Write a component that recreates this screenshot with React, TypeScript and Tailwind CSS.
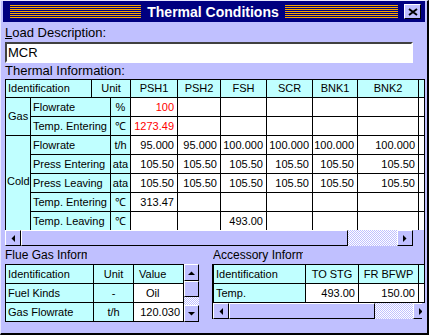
import React from "react";

const raised =
  "bg-[#c0c0ff] border border-t-white border-l-white border-r-black border-b-black flex items-center justify-center shrink-0";
const checker =
  "bg-[conic-gradient(#ffffff_25%,#c0c0ff_0_50%,#ffffff_0_75%,#c0c0ff_0)] bg-[length:2px_2px]";

// orange pinstripes of the title bar
const Stripes = ({ width }: { width: number }) => (
  <svg width={width} height="13" viewBox={`0 0 ${width} 13`} className="shrink-0 block">
    {[0, 2, 4, 6, 8, 10, 12].map((y) => (
      <rect key={y} x="0" y={y} width={width} height="1" fill="#f8a800" />
    ))}
  </svg>
);

const ArrowLeft = () => (
  <svg width="4" height="7" viewBox="0 0 4 7">
    <polygon points="4,0 4,7 0.5,3.5" fill="black" />
  </svg>
);
const ArrowRight = () => (
  <svg width="4" height="7" viewBox="0 0 4 7">
    <polygon points="0,0 0,7 3.5,3.5" fill="black" />
  </svg>
);
const ArrowUp = () => (
  <svg width="7" height="4" viewBox="0 0 7 4">
    <polygon points="0,4 7,4 3.5,0.5" fill="black" />
  </svg>
);
const ArrowDown = () => (
  <svg width="7" height="4" viewBox="0 0 7 4">
    <polygon points="0,0 7,0 3.5,3.5" fill="black" />
  </svg>
);

const head = "bg-[#c0ffff] flex items-center justify-center";
const label = "bg-[#c0ffff] flex items-center pl-[2px] whitespace-nowrap overflow-hidden";
const unit = "bg-[#c0ffff] flex items-center justify-center";
const val = "bg-white flex items-center justify-end pr-[3px] whitespace-nowrap";

// thermal rows (the Gas / Cold label cells span them)
const gasRows = [
  { name: "Flowrate", unit: "%", vals: ["100", "", "", "", "", ""] },
  { name: "Temp. Entering", unit: "℃", vals: ["1273.49", "", "", "", "", ""] },
];
const coldRows = [
  {
    name: "Flowrate",
    unit: "t/h",
    vals: ["95.000", "95.000", "100.000", "100.000", "100.000", "100.000"],
  },
  {
    name: "Press Entering",
    unit: "ata",
    vals: ["105.50", "105.50", "105.50", "105.50", "105.50", "105.50"],
  },
  {
    name: "Press Leaving",
    unit: "ata",
    vals: ["105.50", "105.50", "105.50", "105.50", "105.50", "105.50"],
  },
  { name: "Temp. Entering", unit: "℃", vals: ["313.47", "", "", "", "", ""] },
  { name: "Temp. Leaving", unit: "℃", vals: ["", "", "493.00", "", "", ""] },
];

const Row = ({
  row,
  red,
}: {
  row: { name: string; unit: string; vals: string[] };
  red?: boolean;
}) => (
  <>
    <div className={`${label} col-span-2`}>{row.name}</div>
    <div className={unit}>{row.unit}</div>
    {row.vals.map((v, i) => (
      <div key={i} className={`${val} ${red ? "text-[#ff0000]" : ""}`}>
        {v}
      </div>
    ))}
    <div className="bg-white" />
  </>
);

const App: React.FC = () => {
  return (
    <div className="w-[429px] h-[335px] overflow-hidden bg-[#c0c0ff] border-l border-t border-l-[#e8e8ff] border-t-[#e8e8ff] border-r-2 border-b-2 border-r-black border-b-black font-['Liberation_Sans',Arial,sans-serif] text-black">
      {/* Title bar */}
      <div className="ml-[2px] w-[422px] h-[21px] bg-[#000080] flex items-center pl-[7px] pr-[4px]">
        <Stripes width={131} />
        <div className="flex-1 text-center text-white font-bold text-[14px] leading-none whitespace-nowrap">
          Thermal Conditions
        </div>
        <Stripes width={113} />
        <button className={`${raised} ml-[6px] w-[17px] h-[15px]`} aria-label="Close">
          <svg width="10" height="8" viewBox="0 0 10 8">
            <path d="M1 1L9 7M9 1L1 7" stroke="black" strokeWidth="2" />
          </svg>
        </button>
      </div>

      <div className="pl-[4px]">
        {/* Load description */}
        <div className="h-[20px] pt-[3px] text-[13px] leading-[15px]">
          <span className="underline">L</span>oad Description:
        </div>
        <div className="w-[408px] h-[21px] bg-white border-2 border-t-[#404040] border-l-[#404040] border-b-white border-r-white flex items-center pl-[1px] text-[13px]">
          MCR
        </div>

        {/* Thermal information */}
        <div className="h-[16px] text-[13px] leading-[16px]">Thermal Information:</div>
        <div className="h-[151px] w-[420px] overflow-hidden">
          <div className="grid grid-cols-[24px_60px_18px_19px_46px_42px_45px_45px_44px_60px_5px] grid-rows-[17px_repeat(7,18px)] gap-px bg-black p-px text-[11px] leading-none w-max">
            <div className={`${label} col-span-2`}>Identification</div>
            <div className={`${head} col-span-2`}>Unit</div>
            {["PSH1", "PSH2", "FSH", "SCR", "BNK1", "BNK2"].map((h) => (
              <div key={h} className={head}>
                {h}
              </div>
            ))}
            <div className="bg-[#c0ffff]" />

            <div className={`${label} row-span-2`}>Gas</div>
            {gasRows.map((r) => (
              <Row key={r.name} row={r} red />
            ))}

            <div className="bg-[#c0ffff] row-span-5 flex items-center pl-px pb-[4px]">Cold</div>
            {coldRows.map((r) => (
              <Row key={r.name} row={r} />
            ))}
          </div>
        </div>

        {/* Horizontal scrollbar */}
        <div className="w-[420px] h-[16px] border-r border-r-black">
          <div className="w-[408px] h-[16px] flex">
            <div className={`${raised} w-[16px] h-[16px]`}>
              <ArrowLeft />
            </div>
            <div className={`${raised} w-[327px] h-[16px]`} />
            <div className={`${checker} flex-1 h-[16px]`} />
            <div className={`${raised} w-[16px] h-[16px]`}>
              <ArrowRight />
            </div>
          </div>
        </div>

        {/* Bottom panels */}
        <div className="flex">
          <div className="w-[194px] shrink-0">
            <div className="h-[18px] w-[82px] overflow-hidden whitespace-nowrap text-[12px] leading-[18px]">
              Flue Gas Information
            </div>
            <div className="flex">
              <div className="grid grid-cols-[87px_39px_49px] grid-rows-[18px_18px_18px] gap-px bg-black p-px text-[11px] leading-none">
                <div className={label}>Identification</div>
                <div className={head}>Unit</div>
                <div className="bg-[#c0ffff] flex items-center pl-[5px]">Value</div>
                <div className={label}>Fuel Kinds</div>
                <div className={head}>-</div>
                <div className="bg-white flex items-center pl-[12px]">Oil</div>
                <div className={label}>Gas Flowrate</div>
                <div className={head}>t/h</div>
                <div className={`${val} pr-[2px]`}>120.030</div>
              </div>
              <div className="w-[15px] h-[58px] flex flex-col">
                <div className={`${raised} w-[15px] h-[17px]`}>
                  <ArrowUp />
                </div>
                <div className={`${raised} w-[15px] h-[16px]`} />
                <div className={`${checker} w-[15px] flex-1`} />
                <div className={`${raised} w-[15px] h-[17px]`}>
                  <ArrowDown />
                </div>
              </div>
            </div>
          </div>

          <div className="ml-[13px] w-[213px] shrink-0">
            <div className="h-[18px] pl-[1px] border-r border-r-black">
              <div className="w-[90px] overflow-hidden whitespace-nowrap text-[12px] leading-[18px]">
                Accessory Information
              </div>
            </div>
            <div className="border-l border-l-black">
              <div className="grid grid-cols-[91px_52px_59px_5px] grid-rows-[18px_18px] gap-px bg-black p-px text-[11px] leading-none w-max">
                <div className={label}>Identification</div>
                <div className={head}>TO STG</div>
                <div className={head}>FR BFWP</div>
                <div className="bg-[#c0ffff]" />
                <div className={label}>Temp.</div>
                <div className={val}>493.00</div>
                <div className={val}>150.00</div>
                <div className="bg-white" />
              </div>
              <div className="w-[209px] h-[16px] flex overflow-hidden">
                <div className={`${raised} w-[16px] h-[16px]`}>
                  <ArrowLeft />
                </div>
                <div className={`${raised} w-[146px] h-[16px]`} />
                <div className={`${checker} w-[38px] h-[16px] shrink-0`} />
                <div className={`${raised} w-[16px] h-[16px]`}>
                  <ArrowRight />
                </div>
              </div>
            </div>
          </div>
        </div>
      </div>
    </div>
  );
};

export default App;
